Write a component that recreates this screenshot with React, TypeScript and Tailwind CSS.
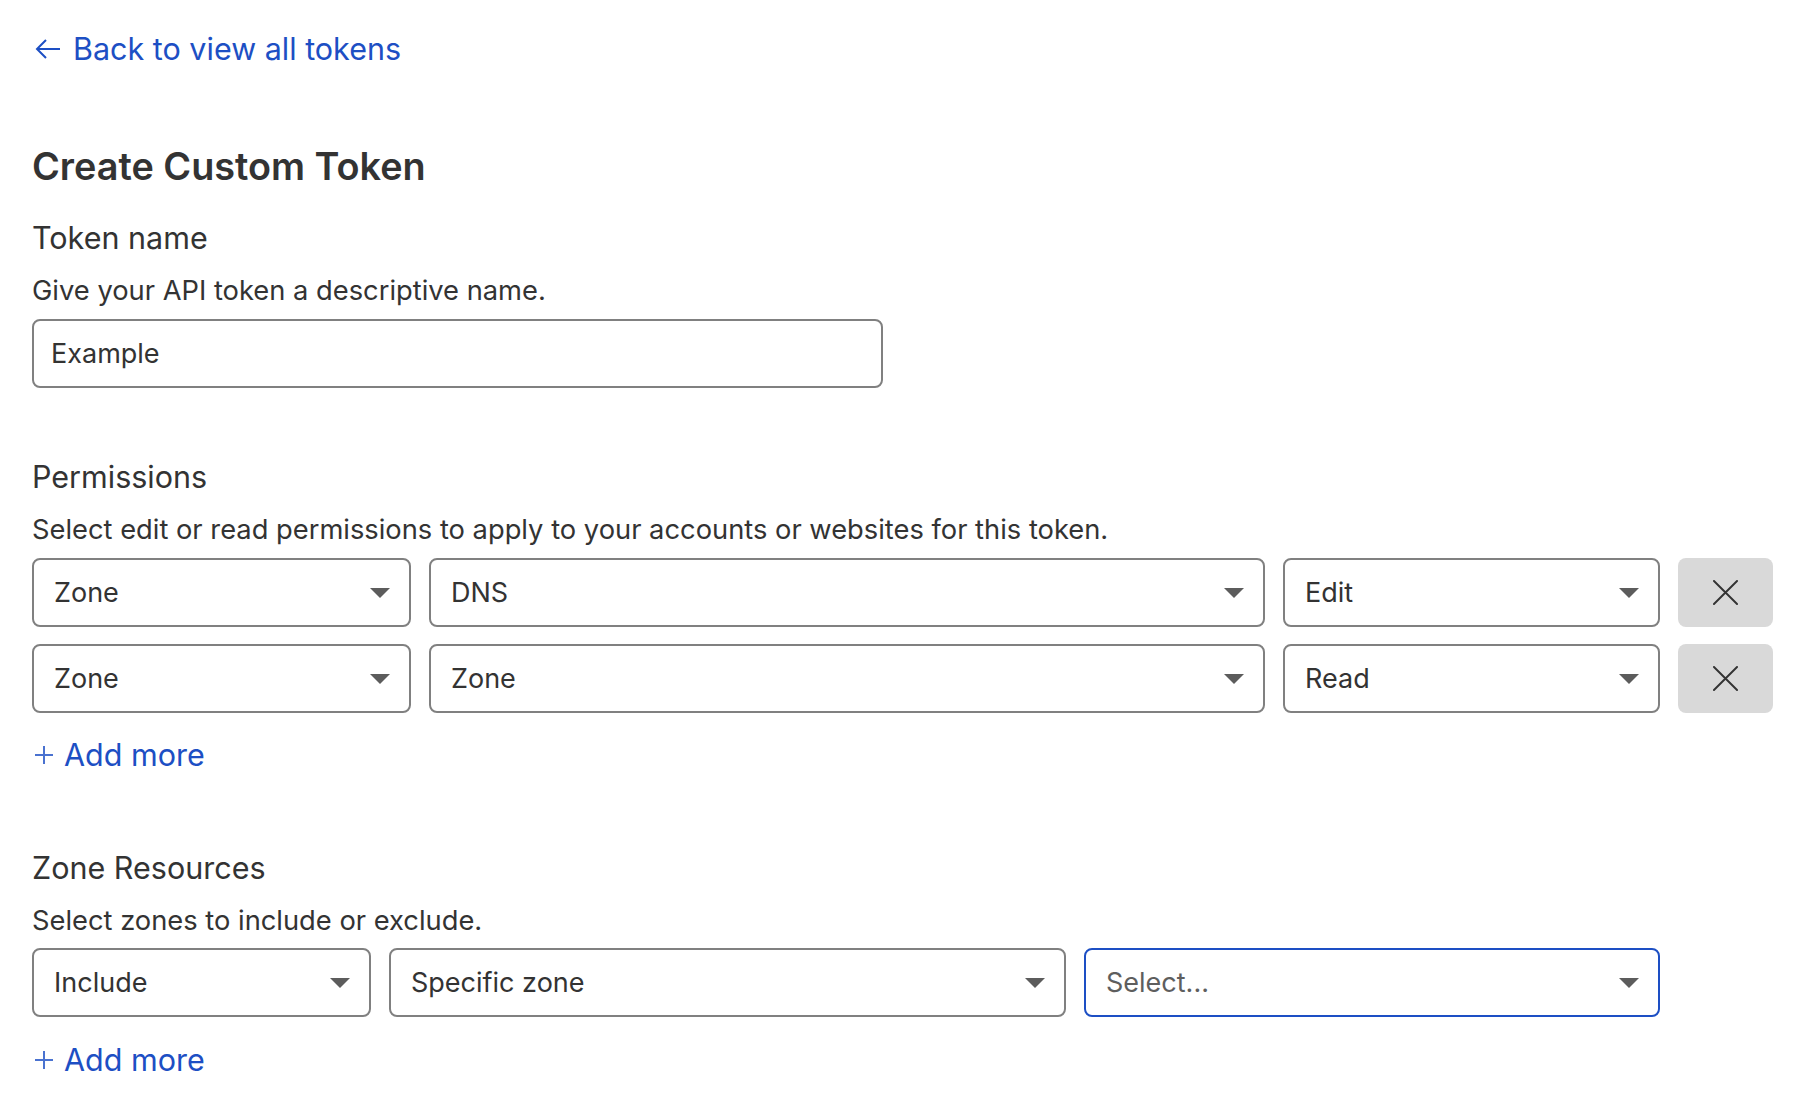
import React from "react";

function Caret() {
  return (
    <svg width="20" height="10" viewBox="0 0 20 10" className="shrink-0">
      <path d="M0 0 L20 0 L10 10 Z" fill="#5c5c5c" />
    </svg>
  );
}

function Select({ value, w, placeholder, focused }: { value: string; w: string; placeholder?: boolean; focused?: boolean }) {
  return (
    <div
      className={`${w} h-[69px] rounded-[8px] border-2 ${focused ? "border-[#1d4fc4]" : "border-[#808080]"} bg-white flex items-center justify-between pl-[20px] pr-[19px]`}
    >
      <span className={`text-[27px] leading-[34px] ${placeholder ? "text-[#5e5e5e]" : "text-[#333333]"}`}>{value}</span>
      <Caret />
    </div>
  );
}

function RemoveButton() {
  return (
    <button className="w-[95px] h-[69px] rounded-[8px] bg-[#d9d9d9] flex items-center justify-center">
      <svg width="25" height="25" viewBox="0 0 26 26">
        <path d="M1 1 L25 25 M25 1 L1 25" stroke="#333333" strokeWidth="2" strokeLinecap="round" />
      </svg>
    </button>
  );
}

function AddMore({ mt }: { mt: string }) {
  return (
    <div className={`${mt} flex items-center h-[34px] text-[#1d4fc4]`}>
      <svg width="18" height="18" viewBox="0 0 18 18" className="ml-[3px] mr-[11px]">
        <path d="M9 0 V18 M0 9 H18" stroke="#4a72d0" strokeWidth="2" />
      </svg>
      <span className="text-[30.5px] leading-[34px]">Add more</span>
    </div>
  );
}

export default function App() {
  return (
    <div
      className="min-h-[1096px] bg-white pl-[32px] text-[#333333]"
      style={{ fontFamily: "Inter, 'Noto Sans', sans-serif" }}
    >
      <div className="pt-[30px] flex items-center h-[68px] text-[#1d4fc4]">
        <svg width="26" height="22" viewBox="0 0 26 22" className="ml-[3px] mr-[12px]">
          <path d="M25 11 H2 M11 2 L2 11 L11 20" stroke="#1d4fc4" strokeWidth="2" fill="none" />
        </svg>
        <span className="text-[30.5px] leading-[38px]">Back to view all tokens</span>
      </div>

      <h1 className="mt-[75px] text-[37.8px] leading-[46px] font-semibold">Create Custom Token</h1>

      <div className="mt-[31px] text-[30.5px] leading-[35px]">Token name</div>
      <div className="mt-[19px] text-[27.3px] leading-[33px]">Give your API token a descriptive name.</div>
      <div className="mt-[12px] w-[851px] h-[69px] rounded-[8px] border-2 border-[#808080] flex items-center pl-[17px]">
        <span className="text-[27px] leading-[34px]">Example</span>
      </div>

      <div className="mt-[71px] text-[30.5px] leading-[35px]">Permissions</div>
      <div className="mt-[19px] text-[27.3px] leading-[33px]">
        Select edit or read permissions to apply to your accounts or websites for this token.
      </div>
      <div className="mt-[12px] grid grid-cols-[379px_836px_377px_95px] gap-x-[18px] gap-y-[17px]">
        <Select value="Zone" w="w-full" />
        <Select value="DNS" w="w-full" />
        <Select value="Edit" w="w-full" />
        <RemoveButton />
        <Select value="Zone" w="w-full" />
        <Select value="Zone" w="w-full" />
        <Select value="Read" w="w-full" />
        <RemoveButton />
      </div>
      <AddMore mt="mt-[25px]" />

      <div className="mt-[78px] text-[30.5px] leading-[35px]">Zone Resources</div>
      <div className="mt-[19px] text-[27.3px] leading-[33px]">Select zones to include or exclude.</div>
      <div className="mt-[11px] flex gap-[18px]">
        <Select value="Include" w="w-[339px]" />
        <Select value="Specific zone" w="w-[677px]" />
        <Select value="Select..." w="w-[576px]" placeholder focused />
      </div>
      <AddMore mt="mt-[26px]" />
    </div>
  );
}
